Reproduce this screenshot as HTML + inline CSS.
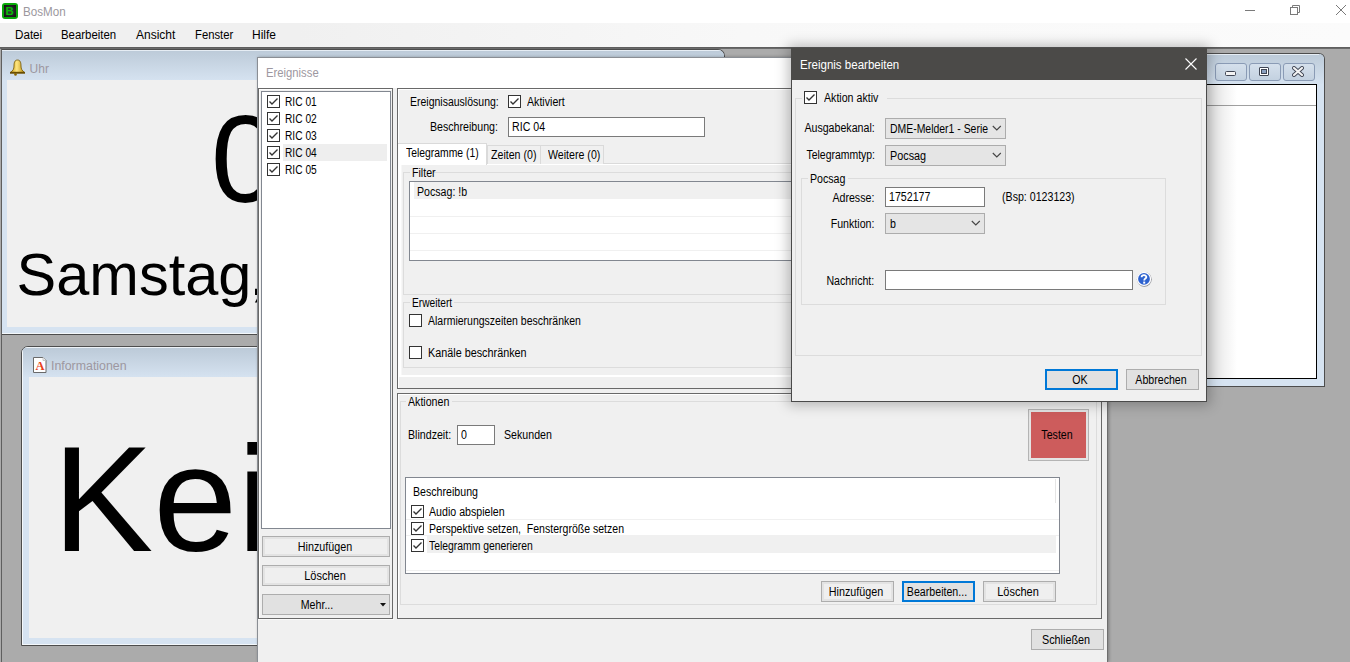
<!DOCTYPE html>
<html><head><meta charset="utf-8"><style>
html,body{margin:0;padding:0;width:1350px;height:662px;overflow:hidden;background:#ababab}
div{position:absolute}
.t{font-family:"Liberation Sans",sans-serif;white-space:nowrap;line-height:1;transform-origin:0 0}
</style></head><body>
<div style="left:0px;top:0px;width:1350px;height:23px;background:#fff"></div>
<div style="left:2px;top:3px;width:16px;height:16px;background:#08aa08;border-radius:3px"></div>
<div style="left:4px;top:5px;width:12px;height:12px;background:radial-gradient(#3a3a3a,#101010)"></div>
<div class="t" style="left:5.5px;top:5px;font-size:11.5px;font-weight:bold;color:#06bb06;line-height:12px">B</div>
<div class="t" style="left:23px;top:6.14px;font-size:12px;transform:scaleX(0.97);color:#9b979d;">BosMon</div>
<div style="left:1245px;top:10px;width:10px;height:1px;background:#7a7a7a"></div>
<svg style="position:absolute;left:1285px;top:2px" width="20" height="16"><rect x="5.5" y="5.5" width="7" height="7" fill="none" stroke="#7a7a7a"/><path d="M7.5 5.5 V3.5 H14.5 V10.5 H12.5" fill="none" stroke="#7a7a7a"/></svg>
<svg style="position:absolute;left:1332px;top:2px" width="18" height="18"><path d="M4 3 L14 13 M14 3 L4 13" stroke="#7a7a7a" stroke-width="1"/></svg>
<div style="left:0px;top:23px;width:1350px;height:24px;background:linear-gradient(to right,#f0f0f0 0,#f0f0f0 22%,#f8f8f8 55%,#fbfbfb 100%)"></div>
<div class="t" style="left:15px;top:29.14px;font-size:12px;transform:scaleX(0.97);color:#000;">Datei</div>
<div class="t" style="left:61px;top:29.14px;font-size:12px;transform:scaleX(0.95);color:#000;">Bearbeiten</div>
<div class="t" style="left:136px;top:29.14px;font-size:12px;transform:scaleX(1.0);color:#000;">Ansicht</div>
<div class="t" style="left:195px;top:29.14px;font-size:12px;transform:scaleX(0.94);color:#000;">Fenster</div>
<div class="t" style="left:252px;top:29.14px;font-size:12px;transform:scaleX(1.0);color:#000;">Hilfe</div>
<div style="left:0px;top:47px;width:1350px;height:615px;background:#ababab"></div>
<div style="left:0px;top:47px;width:1350px;height:1px;background:#5f5f5f"></div>
<div style="left:0px;top:48px;width:1350px;height:1px;background:#6a6a6a"></div>
<div style="left:1px;top:47px;width:1px;height:615px;background:#5f5f5f"></div>
<div style="left:2px;top:49px;width:723px;height:286px;background:#d6e3f1;border:1px solid #4d4d4d;border-left:none;border-radius:0 7px 0 0;box-sizing:border-box;overflow:hidden"><div style="left:0;top:0;width:723px;height:30px;background:linear-gradient(#bccad8,#d5e2f0)"></div><div style="left:0;top:0;width:723px;height:1px;background:#e6edf4"></div><div style="left:0;top:283px;width:723px;height:1px;background:#f4f8fb"></div></div>
<div style="left:7px;top:80px;width:712px;height:247px;background:#f0f0f0"></div>
<div style="left:2px;top:333px;width:722px;height:1px;background:#f4f8fb"></div>
<svg style="position:absolute;left:9px;top:59px" width="17" height="17" viewBox="0 0 17 17"><defs><linearGradient id="bl" x1="0" x2="1"><stop offset="0" stop-color="#c89a10"/><stop offset=".45" stop-color="#ffe680"/><stop offset="1" stop-color="#b88a08"/></linearGradient></defs><path d="M8.5 1 C5.5 1 5 4 5 7 C5 10 4 11.5 1.5 13.5 L15.5 13.5 C13 11.5 12 10 12 7 C12 4 11.5 1 8.5 1Z" fill="url(#bl)" stroke="#6e5200" stroke-width=".8"/><rect x="1" y="12.8" width="15" height="1.9" fill="#6a4e00"/><circle cx="6.5" cy="15.4" r="1.3" fill="#8a6600"/></svg>
<div class="t" style="left:29.6px;top:62.74px;font-size:12px;transform:scaleX(1);color:#9d97a0;">Uhr</div>
<div class="t" style="left:210.85px;top:97.44px;font-size:124.7px;transform:scaleX(1);color:#000;">0</div>
<div class="t" style="left:16.6px;top:244.63px;font-size:59.5px;transform:scaleX(1);color:#000;">Samstag</div>
<div class="t" style="left:249.6px;top:244.63px;font-size:59.5px;transform:scaleX(1);color:#000;">,</div>
<div style="left:21px;top:346px;width:700px;height:300px;background:#d6e3f1;border:1px solid #4d4d4d;border-radius:7px 7px 0 0;box-sizing:border-box;overflow:hidden;box-shadow:inset 1px 1px 0 #f4f8fb, inset 0 -1px 0 #f4f8fb"><div style="left:1px;top:1px;width:700px;height:29px;background:linear-gradient(#bccad8,#d5e2f0)"></div><div style="left:1px;top:0;width:700px;height:1px;background:#eef3f8"></div><div style="left:0;top:1px;width:1px;height:300px;background:#f4f8fb"></div></div>
<div style="left:29px;top:377px;width:690px;height:261px;background:#f0f0f0"></div>
<svg style="position:absolute;left:33px;top:357px" width="15" height="17" viewBox="0 0 15 17"><path d="M0.5 0.5 H10 L13 3.5 V15.5 H0.5Z" fill="#fff" stroke="#6a6a6a" stroke-width="1"/><path d="M10 0.5 V3.5 H13" fill="#eee" stroke="#bbb" stroke-width=".8"/><text x="7" y="13.2" font-family="Liberation Serif" font-weight="bold" font-size="12.5" fill="#e8401a" text-anchor="middle">A</text></svg>
<div class="t" style="left:51px;top:359.64px;font-size:12px;transform:scaleX(1.03);color:#9d97a0;">Informationen</div>
<div class="t" style="left:52.5px;top:423.18px;font-size:151px;transform:scaleX(1);color:#000;">Kei</div>
<div style="left:257px;top:57px;width:851px;height:605px;background:#f0f0f0;border-left:1px solid #8a8e94;border-top:1px solid #8a8e94;border-right:1px solid #6e6e6e;box-sizing:border-box;box-shadow:1px 0 3px rgba(0,0,0,.28)"></div>
<div style="left:258px;top:58px;width:849px;height:30px;background:#fff"></div>
<div class="t" style="left:266px;top:66.84px;font-size:12px;transform:scaleX(0.94);color:#9d97a0;">Ereignisse</div>
<div style="left:258px;top:88px;width:135px;height:531px;border:1px solid #696969;box-sizing:border-box;box-shadow:inset 1px 1px 0 #fff"></div>
<div style="left:258px;top:619px;width:136px;height:1px;background:#fafafa"></div>
<div style="left:261px;top:91px;width:130px;height:438px;background:#fff;border:1px solid #828790;box-sizing:border-box"></div>
<div style="left:283px;top:144px;width:104px;height:17px;background:#eeeeee"></div>
<div style="left:267px;top:95px;width:13px;height:13px"><svg width="13" height="13" viewBox="0 0 13 13" style="position:absolute;left:0;top:0"><rect x="0.5" y="0.5" width="12" height="12" fill="#fff" stroke="#333"/><path d="M2.5 6.5 L5 9 L10.5 3.5" fill="none" stroke="#333" stroke-width="1.35"/></svg></div>
<div class="t" style="left:284.6px;top:96.32px;font-size:12.5px;transform:scaleX(0.815);color:#000;">RIC 01</div>
<div style="left:267px;top:112px;width:13px;height:13px"><svg width="13" height="13" viewBox="0 0 13 13" style="position:absolute;left:0;top:0"><rect x="0.5" y="0.5" width="12" height="12" fill="#fff" stroke="#333"/><path d="M2.5 6.5 L5 9 L10.5 3.5" fill="none" stroke="#333" stroke-width="1.35"/></svg></div>
<div class="t" style="left:284.6px;top:113.32px;font-size:12.5px;transform:scaleX(0.815);color:#000;">RIC 02</div>
<div style="left:267px;top:129px;width:13px;height:13px"><svg width="13" height="13" viewBox="0 0 13 13" style="position:absolute;left:0;top:0"><rect x="0.5" y="0.5" width="12" height="12" fill="#fff" stroke="#333"/><path d="M2.5 6.5 L5 9 L10.5 3.5" fill="none" stroke="#333" stroke-width="1.35"/></svg></div>
<div class="t" style="left:284.6px;top:130.32px;font-size:12.5px;transform:scaleX(0.815);color:#000;">RIC 03</div>
<div style="left:267px;top:146px;width:13px;height:13px"><svg width="13" height="13" viewBox="0 0 13 13" style="position:absolute;left:0;top:0"><rect x="0.5" y="0.5" width="12" height="12" fill="#fff" stroke="#333"/><path d="M2.5 6.5 L5 9 L10.5 3.5" fill="none" stroke="#333" stroke-width="1.35"/></svg></div>
<div class="t" style="left:284.6px;top:147.32px;font-size:12.5px;transform:scaleX(0.815);color:#000;">RIC 04</div>
<div style="left:267px;top:163px;width:13px;height:13px"><svg width="13" height="13" viewBox="0 0 13 13" style="position:absolute;left:0;top:0"><rect x="0.5" y="0.5" width="12" height="12" fill="#fff" stroke="#333"/><path d="M2.5 6.5 L5 9 L10.5 3.5" fill="none" stroke="#333" stroke-width="1.35"/></svg></div>
<div class="t" style="left:284.6px;top:164.32px;font-size:12.5px;transform:scaleX(0.815);color:#000;">RIC 05</div>
<div style="left:262px;top:536px;width:128px;height:21px;background:#efefef;border:1px solid #adadad;box-shadow:inset 0 0 0 2px #e3e3e3;box-sizing:border-box"></div>
<div class="t" style="left:24.5px;width:600px;text-align:center;top:541.42px;font-size:12.5px;transform:scaleX(0.86);transform-origin:50% 0;color:#000;">Hinzufügen</div>
<div style="left:262px;top:565px;width:128px;height:21px;background:#efefef;border:1px solid #adadad;box-shadow:inset 0 0 0 2px #e3e3e3;box-sizing:border-box"></div>
<div class="t" style="left:24.5px;width:600px;text-align:center;top:570.42px;font-size:12.5px;transform:scaleX(0.88);transform-origin:50% 0;color:#000;">Löschen</div>
<div style="left:262px;top:594px;width:128px;height:21px;background:#e1e1e1;border:1px solid #adadad;box-sizing:border-box"></div>
<div class="t" style="left:16.5px;width:600px;text-align:center;top:599.42px;font-size:12.5px;transform:scaleX(0.85);transform-origin:50% 0;color:#000;">Mehr...</div>
<svg style="position:absolute;left:379.5px;top:603px" width="8" height="5"><path d="M0 0 H6 L3 3.5Z" fill="#111"/></svg>
<div style="left:397px;top:88px;width:705px;height:301px;border:1px solid #696969;box-sizing:border-box;box-shadow:inset 1px 1px 0 #fff"></div>
<div class="t" style="left:409.5px;top:96.22px;font-size:12.5px;transform:scaleX(0.84);color:#000;">Ereignisauslösung:</div>
<div style="left:508px;top:95px;width:13px;height:13px"><svg width="13" height="13" viewBox="0 0 13 13" style="position:absolute;left:0;top:0"><rect x="0.5" y="0.5" width="12" height="12" fill="#fff" stroke="#333"/><path d="M2.5 6.5 L5 9 L10.5 3.5" fill="none" stroke="#333" stroke-width="1.35"/></svg></div>
<div class="t" style="left:527px;top:96.22px;font-size:12.5px;transform:scaleX(0.85);color:#000;">Aktiviert</div>
<div class="t" style="left:430.4px;top:121.02px;font-size:12.5px;transform:scaleX(0.85);color:#000;">Beschreibung:</div>
<div style="left:508px;top:117px;width:197px;height:20px;background:#fff;border:1px solid #7a7a7a;box-sizing:border-box"></div>
<div class="t" style="left:512px;top:121.02px;font-size:12.5px;transform:scaleX(0.85);color:#000;">RIC 04</div>
<div style="left:398px;top:163px;width:703px;height:214px;background:#fff;border-top:1px solid #dadada;box-sizing:border-box"></div>
<div style="left:402px;top:165px;width:695px;height:210px;background:#f0f0f0;box-shadow:-1px 0 0 #f7f7f7"></div>
<div style="left:487px;top:145px;width:54px;height:19px;background:#f0f0f0;border:1px solid #dadada;border-bottom:none;box-sizing:border-box"></div>
<div style="left:541px;top:145px;width:63px;height:19px;background:#f0f0f0;border:1px solid #dadada;border-bottom:none;border-left:none;box-sizing:border-box"></div>
<div style="left:398px;top:143px;width:89px;height:22px;background:#fff;border:1px solid #dadada;border-bottom:none;border-left:none;box-sizing:border-box"></div>
<div class="t" style="left:405.7px;top:147.02px;font-size:12.5px;transform:scaleX(0.83);color:#000;">Telegramme (1)</div>
<div class="t" style="left:491.4px;top:149.42px;font-size:12.5px;transform:scaleX(0.85);color:#000;">Zeiten (0)</div>
<div class="t" style="left:548px;top:149.42px;font-size:12.5px;transform:scaleX(0.85);color:#000;">Weitere (0)</div>
<div style="left:403px;top:172px;width:691px;height:123px;border:1px solid #dcdcdc;box-sizing:border-box"></div>
<div style="left:410.4px;top:166px;width:24px;height:12px;background:#f0f0f0"></div>
<div class="t" style="left:412.4px;top:167.32px;font-size:12.5px;transform:scaleX(0.85);color:#000;">Filter</div>
<div style="left:409px;top:181px;width:680px;height:80px;background:#fff;border:1px solid #828790;box-sizing:border-box"></div>
<div style="left:414px;top:182px;width:674px;height:17px;background:#f0f0f0"></div>
<div class="t" style="left:417px;top:185.92px;font-size:12.5px;transform:scaleX(0.85);color:#000;">Pocsag: !b</div>
<div style="left:410px;top:216px;width:678px;height:1px;background:#f0f0f0"></div>
<div style="left:410px;top:233px;width:678px;height:1px;background:#f0f0f0"></div>
<div style="left:410px;top:250px;width:678px;height:1px;background:#f0f0f0"></div>
<div style="left:403px;top:302px;width:691px;height:66px;border:1px solid #dcdcdc;box-sizing:border-box"></div>
<div style="left:410px;top:296px;width:44px;height:12px;background:#f0f0f0"></div>
<div class="t" style="left:412px;top:297.12px;font-size:12.5px;transform:scaleX(0.815);color:#000;">Erweitert</div>
<div style="left:409px;top:314px;width:13px;height:13px;background:#fff;border:1px solid #333;box-sizing:border-box"></div>
<div class="t" style="left:428px;top:314.92px;font-size:12.5px;transform:scaleX(0.84);color:#000;">Alarmierungszeiten beschränken</div>
<div style="left:409px;top:346px;width:13px;height:13px;background:#fff;border:1px solid #333;box-sizing:border-box"></div>
<div class="t" style="left:427.5px;top:346.62px;font-size:12.5px;transform:scaleX(0.865);color:#000;">Kanäle beschränken</div>
<div style="left:397px;top:393px;width:705px;height:226px;border:1px solid #696969;box-sizing:border-box;box-shadow:inset 1px 1px 0 #fff"></div>
<div style="left:400px;top:401px;width:697px;height:204px;border:1px solid #dcdcdc;box-sizing:border-box"></div>
<div style="left:406.3px;top:395px;width:46px;height:12px;background:#f0f0f0"></div>
<div class="t" style="left:408.3px;top:396.42px;font-size:12.5px;transform:scaleX(0.85);color:#000;">Aktionen</div>
<div class="t" style="left:408.3px;top:429.42px;font-size:12.5px;transform:scaleX(0.85);color:#000;">Blindzeit:</div>
<div style="left:457px;top:425px;width:38px;height:20px;background:#fff;border:1px solid #7a7a7a;box-sizing:border-box"></div>
<div class="t" style="left:461px;top:429.42px;font-size:12.5px;transform:scaleX(0.85);color:#000;">0</div>
<div class="t" style="left:504px;top:429.42px;font-size:12.5px;transform:scaleX(0.85);color:#000;">Sekunden</div>
<div style="left:1028px;top:409px;width:61px;height:52px;background:#cd5c5c;border:1px solid #b4b4b4;box-shadow:inset 0 0 0 2px #e4e4e4;box-sizing:border-box"></div>
<div class="t" style="left:757px;width:600px;text-align:center;top:428.92px;font-size:12.5px;transform:scaleX(0.85);transform-origin:50% 0;color:#000;">Testen</div>
<div style="left:405px;top:477px;width:655px;height:97px;background:#fff;border:1px solid #828790;box-sizing:border-box"></div>
<div class="t" style="left:413px;top:485.82px;font-size:12.5px;transform:scaleX(0.85);color:#000;">Beschreibung</div>
<div style="left:1055px;top:479px;width:1px;height:24px;background:#e5e5e5"></div>
<div style="left:406px;top:519px;width:653px;height:1px;background:#f0f0f0"></div>
<div style="left:406px;top:535px;width:653px;height:1px;background:#f0f0f0"></div>
<div style="left:427px;top:536px;width:629px;height:17px;background:#f0f0f0"></div>
<div style="left:406px;top:570px;width:653px;height:1px;background:#f0f0f0"></div>
<div style="left:411px;top:505px;width:13px;height:13px"><svg width="13" height="13" viewBox="0 0 13 13" style="position:absolute;left:0;top:0"><rect x="0.5" y="0.5" width="12" height="12" fill="#fff" stroke="#333"/><path d="M2.5 6.5 L5 9 L10.5 3.5" fill="none" stroke="#333" stroke-width="1.35"/></svg></div>
<div class="t" style="left:429.3px;top:506.42px;font-size:12.5px;transform:scaleX(0.85);color:#000;">Audio abspielen</div>
<div style="left:411px;top:522px;width:13px;height:13px"><svg width="13" height="13" viewBox="0 0 13 13" style="position:absolute;left:0;top:0"><rect x="0.5" y="0.5" width="12" height="12" fill="#fff" stroke="#333"/><path d="M2.5 6.5 L5 9 L10.5 3.5" fill="none" stroke="#333" stroke-width="1.35"/></svg></div>
<div class="t" style="left:429.3px;top:523.42px;font-size:12.5px;transform:scaleX(0.843);color:#000;">Perspektive setzen,&nbsp; Fenstergröße setzen</div>
<div style="left:411px;top:539px;width:13px;height:13px"><svg width="13" height="13" viewBox="0 0 13 13" style="position:absolute;left:0;top:0"><rect x="0.5" y="0.5" width="12" height="12" fill="#fff" stroke="#333"/><path d="M2.5 6.5 L5 9 L10.5 3.5" fill="none" stroke="#333" stroke-width="1.35"/></svg></div>
<div class="t" style="left:429.3px;top:540.42px;font-size:12.5px;transform:scaleX(0.83);color:#000;">Telegramm generieren</div>
<div style="left:821px;top:581px;width:73px;height:21px;background:#efefef;border:1px solid #adadad;box-shadow:inset 0 0 0 2px #e3e3e3;box-sizing:border-box"></div>
<div class="t" style="left:556.0px;width:600px;text-align:center;top:585.92px;font-size:12.5px;transform:scaleX(0.86);transform-origin:50% 0;color:#000;">Hinzufügen</div>
<div style="left:902px;top:581px;width:73px;height:21px;background:#e1e1e1;border:2px solid #0078d7;box-sizing:border-box"></div>
<div class="t" style="left:637.0px;width:600px;text-align:center;top:585.92px;font-size:12.5px;transform:scaleX(0.85);transform-origin:50% 0;color:#000;">Bearbeiten...</div>
<div style="left:983px;top:581px;width:73px;height:21px;background:#efefef;border:1px solid #adadad;box-shadow:inset 0 0 0 2px #e3e3e3;box-sizing:border-box"></div>
<div class="t" style="left:718.0px;width:600px;text-align:center;top:585.92px;font-size:12.5px;transform:scaleX(0.88);transform-origin:50% 0;color:#000;">Löschen</div>
<div style="left:1031px;top:629px;width:73px;height:21px;background:#e1e1e1;border:1px solid #adadad;box-sizing:border-box"></div>
<div class="t" style="left:766.0px;width:600px;text-align:center;top:633.92px;font-size:12.5px;transform:scaleX(0.865);transform-origin:50% 0;color:#000;">Schließen</div>
<div style="left:1207px;top:53px;width:118px;height:334px;background:#d6e3f1;border:1px solid #4d4d4d;border-left:none;border-radius:0 6px 0 0;box-sizing:border-box;overflow:hidden"></div>
<div style="left:1207px;top:54px;width:117px;height:30px;background:linear-gradient(#bccad8,#d5e2f0);border-radius:0 5px 0 0"></div>
<div style="left:1207px;top:54px;width:112px;height:1px;background:#e6edf4"></div>
<div style="left:1207px;top:84px;width:110px;height:295px;background:#fff;border:1px solid #000;border-left:none;box-sizing:border-box;border-top-width:1px"></div>
<div style="left:1207px;top:105px;width:109px;height:1px;background:#a0a0a0"></div>
<div style="left:1215px;top:63px;width:32px;height:18px;border:1px solid #8a9bb5;border-radius:3px;background:linear-gradient(#d5e0ec,#c3d1e0);box-sizing:border-box"></div>
<div style="left:1249px;top:63px;width:32px;height:18px;border:1px solid #8a9bb5;border-radius:3px;background:linear-gradient(#d5e0ec,#c3d1e0);box-sizing:border-box"></div>
<div style="left:1283px;top:63px;width:32px;height:18px;border:1px solid #8a9bb5;border-radius:3px;background:linear-gradient(#d5e0ec,#c3d1e0);box-sizing:border-box"></div>
<div style="left:1225px;top:71px;width:11px;height:5px;background:#f4f4f4;border:1px solid #404654;border-radius:1.5px;box-sizing:border-box"></div>
<div style="left:1259px;top:67px;width:10px;height:9px;background:#fff;border:1px solid #404654;border-radius:1px;box-sizing:border-box"></div>
<div style="left:1262px;top:70px;width:4px;height:3px;background:#8aa0c0;border:1px solid #404654;box-sizing:content-box;left:1261px;top:69px"></div>
<svg style="position:absolute;left:1292px;top:66px" width="12" height="11"><path d="M2 2 L10 9 M10 2 L2 9" stroke="#404654" stroke-width="4" stroke-linecap="round"/><path d="M2 2 L10 9 M10 2 L2 9" stroke="#f4f4f4" stroke-width="2.2" stroke-linecap="round"/></svg>
<div style="left:1207px;top:84px;width:30px;height:295px;background:linear-gradient(to right,rgba(0,0,0,.12),rgba(0,0,0,0))"></div>
<div style="left:791px;top:48px;width:416px;height:354px;box-shadow:0 0 12px 3px rgba(0,0,0,.25)"></div>
<div style="left:791px;top:48px;width:416px;height:354px;background:#f0f0f0;border:1px solid #4a4a4a;box-sizing:border-box"></div>
<div style="left:791px;top:48px;width:416px;height:32px;background:#4b4a48"></div>
<div class="t" style="left:800px;top:58.54px;font-size:12px;transform:scaleX(0.96);color:#fff;">Ereignis bearbeiten</div>
<svg style="position:absolute;left:1184px;top:57px" width="14" height="14"><path d="M1.5 1.5 L12.5 12.5 M12.5 1.5 L1.5 12.5" stroke="#fff" stroke-width="1.1"/></svg>
<div style="left:795px;top:98px;width:407px;height:258px;border:1px solid #dcdcdc;box-sizing:border-box"></div>
<div style="left:802px;top:89px;width:85px;height:16px;background:#f0f0f0"></div>
<div style="left:804px;top:91px;width:13px;height:13px"><svg width="13" height="13" viewBox="0 0 13 13" style="position:absolute;left:0;top:0"><rect x="0.5" y="0.5" width="12" height="12" fill="#fff" stroke="#333"/><path d="M2.5 6.5 L5 9 L10.5 3.5" fill="none" stroke="#333" stroke-width="1.35"/></svg></div>
<div class="t" style="left:823.5px;top:92.42px;font-size:12.5px;transform:scaleX(0.85);color:#000;">Aktion aktiv</div>
<div class="t" style="right:475.5px;top:122.42px;font-size:12.5px;transform:scaleX(0.85);transform-origin:100% 0;color:#000;">Ausgabekanal:</div>
<div style="left:885px;top:118px;width:121px;height:21px;background:#e5e5e5;border:1px solid #acacac;box-sizing:border-box"></div>
<div class="t" style="left:890px;top:123.02px;font-size:12.5px;transform:scaleX(0.835);color:#000;">DME-Melder1 - Serie</div>
<svg style="position:absolute;left:992px;top:125px" width="10" height="7"><path d="M0.8 1 L4.8 5 L8.8 1" fill="none" stroke="#444" stroke-width="1.1"/></svg>
<div class="t" style="right:475.5px;top:149.42px;font-size:12.5px;transform:scaleX(0.835);transform-origin:100% 0;color:#000;">Telegrammtyp:</div>
<div style="left:885px;top:145px;width:121px;height:21px;background:#e5e5e5;border:1px solid #acacac;box-sizing:border-box"></div>
<div class="t" style="left:890px;top:149.92px;font-size:12.5px;transform:scaleX(0.865);color:#000;">Pocsag</div>
<svg style="position:absolute;left:992px;top:152px" width="10" height="7"><path d="M0.8 1 L4.8 5 L8.8 1" fill="none" stroke="#444" stroke-width="1.1"/></svg>
<div style="left:801px;top:178px;width:365px;height:127px;border:1px solid #dcdcdc;box-sizing:border-box"></div>
<div style="left:808.4px;top:172px;width:40px;height:12px;background:#f0f0f0"></div>
<div class="t" style="left:810.4px;top:173.22px;font-size:12.5px;transform:scaleX(0.85);color:#000;">Pocsag</div>
<div class="t" style="right:475.5px;top:191.62px;font-size:12.5px;transform:scaleX(0.85);transform-origin:100% 0;color:#000;">Adresse:</div>
<div style="left:885px;top:187px;width:100px;height:20px;background:#fff;border:1px solid #7a7a7a;box-sizing:border-box"></div>
<div class="t" style="left:889px;top:190.72px;font-size:12.5px;transform:scaleX(0.85);color:#000;">1752177</div>
<div class="t" style="left:1001.5px;top:191.22px;font-size:12.5px;transform:scaleX(0.85);color:#000;">(Bsp: 0123123)</div>
<div class="t" style="right:475.5px;top:217.62px;font-size:12.5px;transform:scaleX(0.85);transform-origin:100% 0;color:#000;">Funktion:</div>
<div style="left:885px;top:213px;width:100px;height:21px;background:#e5e5e5;border:1px solid #acacac;box-sizing:border-box"></div>
<div class="t" style="left:890px;top:217.92px;font-size:12.5px;transform:scaleX(0.85);color:#000;">b</div>
<svg style="position:absolute;left:971px;top:220px" width="10" height="7"><path d="M0.8 1 L4.8 5 L8.8 1" fill="none" stroke="#444" stroke-width="1.1"/></svg>
<div class="t" style="right:475.5px;top:274.72px;font-size:12.5px;transform:scaleX(0.85);transform-origin:100% 0;color:#000;">Nachricht:</div>
<div style="left:885px;top:270px;width:248px;height:20px;background:#fff;border:1px solid #7a7a7a;box-sizing:border-box"></div>
<svg style="position:absolute;left:1136px;top:271px" width="17" height="17" viewBox="0 0 17 17"><circle cx="8.3" cy="8.3" r="7.4" fill="#2b2f3a" opacity=".55"/><circle cx="8" cy="7.9" r="7.2" fill="#fdfdff"/><circle cx="8" cy="7.9" r="5.9" fill="#2d62cf"/><path d="M5.6 6.2 C5.6 3.6 10.4 3.6 10.4 6 C10.4 7.5 8.2 7.6 8.2 9.4" fill="none" stroke="#fff" stroke-width="1.8"/><rect x="7.2" y="10.6" width="2" height="2" fill="#fff"/></svg>
<div style="left:1045px;top:369px;width:73px;height:21px;background:#e1e1e1;border:2px solid #0078d7;box-sizing:border-box"></div>
<div class="t" style="left:780.0px;width:600px;text-align:center;top:373.92px;font-size:12.5px;transform:scaleX(0.85);transform-origin:50% 0;color:#000;">OK</div>
<div style="left:1126px;top:369px;width:73px;height:21px;background:#e1e1e1;border:1px solid #adadad;box-sizing:border-box"></div>
<div class="t" style="left:861.0px;width:600px;text-align:center;top:373.92px;font-size:12.5px;transform:scaleX(0.85);transform-origin:50% 0;color:#000;">Abbrechen</div>
</body></html>
